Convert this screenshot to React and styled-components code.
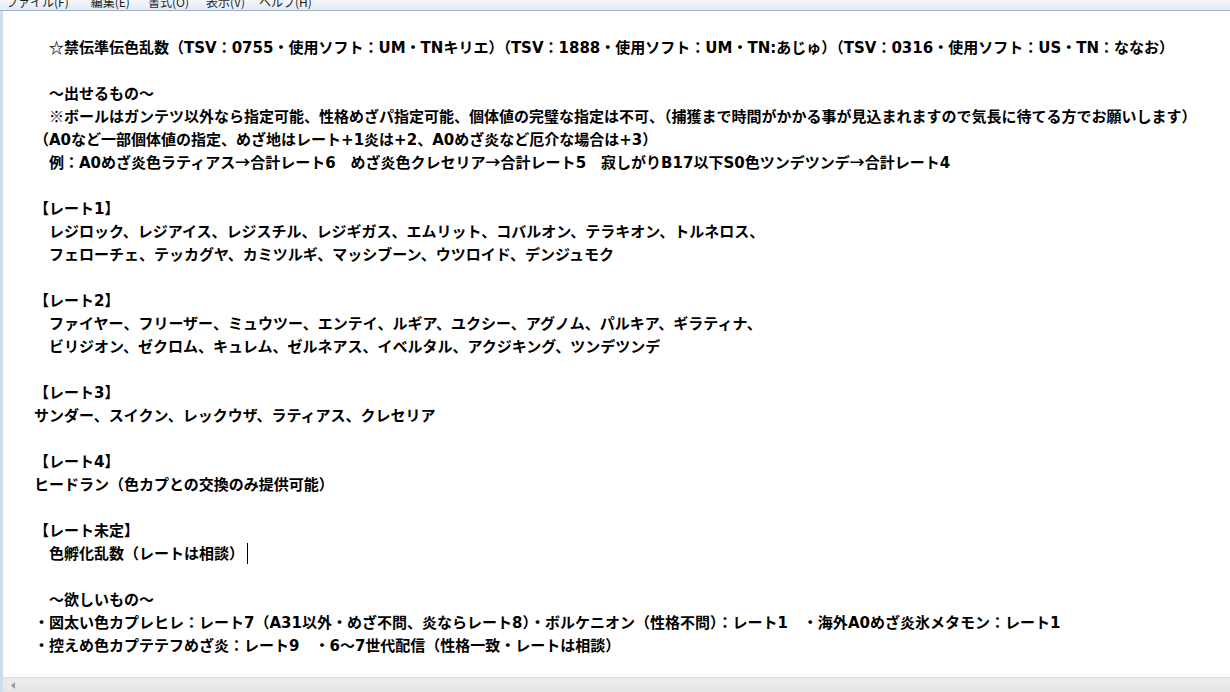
import styled, { createGlobalStyle } from 'styled-components'

const GlobalStyle = createGlobalStyle`
  html, body {
    margin: 0;
    padding: 0;
    background: #ffffff;
    overflow: hidden;
  }
`

const Window = styled.div`
  width: 1230px;
  height: 692px;
  display: flex;
  flex-direction: column;
  background: #ffffff;
  overflow: hidden;
`

const MenuBar = styled.div`
  height: 10px;
  flex: none;
  overflow: hidden;
  background: linear-gradient(#f4f7fb, #e4ebf4);
  border-bottom: 1px solid #9fb2c6;
`

const MenuRow = styled.div`
  display: flex;
  margin-top: -8px;
  padding-left: 6px;
  height: 19px;
  align-items: center;
  font-family: 'Noto Sans CJK JP', 'Noto Sans', sans-serif;
  font-size: 12px;
  color: #1e1e1e;
`

const MenuItem = styled.span`
  margin-right: ${({ gap }) => gap}px;
  white-space: nowrap;
`

const Editor = styled.div`
  flex: 1;
  border-left: 3px solid #cfdcea;
  padding: 1px 0 0 31px;
  font-family: 'DejaVu Sans', 'Noto Sans CJK JP', sans-serif;
  font-weight: 700;
  font-size: 15px;
  line-height: 23px;
  color: #000000;
  overflow: hidden;
`

const Line = styled.div`
  height: 23px;
  white-space: pre;
`

// CJK-only symbols so DejaVu doesn't take them over
const Cjk = styled.span`
  font-family: 'Noto Sans CJK JP', sans-serif;
`

const Caret = styled.span`
  display: inline-block;
  width: 1px;
  height: 21px;
  margin-left: 3px;
  vertical-align: -5px;
  background: #000000;
`

const HScroll = styled.div`
  height: 14px;
  flex: none;
  display: flex;
  align-items: center;
  padding-left: 8px;
  border-top: 1px solid #dadada;
  border-left: 3px solid #cfdcea;
  background: linear-gradient(#ececec, #e6e6e6);
`

const Arrow = styled.svg`
  width: 5px;
  height: 7px;
`

const menu = [
  ['ファイル(F)', 22],
  ['編集(E)', 18],
  ['書式(O)', 17],
  ['表示(V)', 14],
  ['ヘルプ(H)', 0],
]

const lines = [
  '',
  '　☆禁伝準伝色乱数（TSV：0755・使用ソフト：UM・TNキリエ）（TSV：1888・使用ソフト：UM・TN:あじゅ）（TSV：0316・使用ソフト：US・TN：ななお）',
  '',
  '　～出せるもの～',
  '　※ボールはガンテツ以外なら指定可能、性格めざパ指定可能、個体値の完璧な指定は不可、（捕獲まで時間がかかる事が見込まれますので気長に待てる方でお願いします）',
  '（A0など一部個体値の指定、めざ地はレート+1炎は+2、A0めざ炎など厄介な場合は+3）',
  '　例：A0めざ炎色ラティアス→合計レート6　めざ炎色クレセリア→合計レート5　寂しがりB17以下S0色ツンデツンデ→合計レート4',
  '',
  '【レート1】',
  '　レジロック、レジアイス、レジスチル、レジギガス、エムリット、コバルオン、テラキオン、トルネロス、',
  '　フェローチェ、テッカグヤ、カミツルギ、マッシブーン、ウツロイド、デンジュモク',
  '',
  '【レート2】',
  '　ファイヤー、フリーザー、ミュウツー、エンテイ、ルギア、ユクシー、アグノム、パルキア、ギラティナ、',
  '　ビリジオン、ゼクロム、キュレム、ゼルネアス、イベルタル、アクジキング、ツンデツンデ',
  '',
  '【レート3】',
  'サンダー、スイクン、レックウザ、ラティアス、クレセリア',
  '',
  '【レート4】',
  'ヒードラン（色カプとの交換のみ提供可能）',
  '',
  '【レート未定】',
  { text: '　色孵化乱数（レートは相談）', caret: true },
  '',
  '　～欲しいもの～',
  '・図太い色カプレヒレ：レート7（A31以外・めざ不問、炎ならレート8）・ボルケニオン（性格不問）：レート1　・海外A0めざ炎氷メタモン：レート1',
  '・控えめ色カプテテフめざ炎：レート9　・6～7世代配信（性格一致・レートは相談）',
]

// Latin letters and digits stay in DejaVu; everything else goes to the CJK face
const render = (text) =>
  text.split(/([A-Za-z0-9+:]+)/).map((part, i) =>
    i % 2 ? part : part && <Cjk key={i}>{part}</Cjk>
  )

export default function App() {
  return (
    <>
      <GlobalStyle />
      <Window>
        <MenuBar>
          <MenuRow>
            {menu.map(([label, gap]) => (
              <MenuItem key={label} gap={gap}>
                {label}
              </MenuItem>
            ))}
          </MenuRow>
        </MenuBar>
        <Editor>
          {lines.map((line, i) =>
            typeof line === 'string' ? (
              <Line key={i}>{render(line)}</Line>
            ) : (
              <Line key={i}>
                {render(line.text)}
                <Caret />
              </Line>
            )
          )}
        </Editor>
        <HScroll>
          <Arrow viewBox="0 0 5 7">
            <path d="M4 0 L0 3.5 L4 7 Z" fill="#9a9a9a" />
          </Arrow>
        </HScroll>
      </Window>
    </>
  )
}
